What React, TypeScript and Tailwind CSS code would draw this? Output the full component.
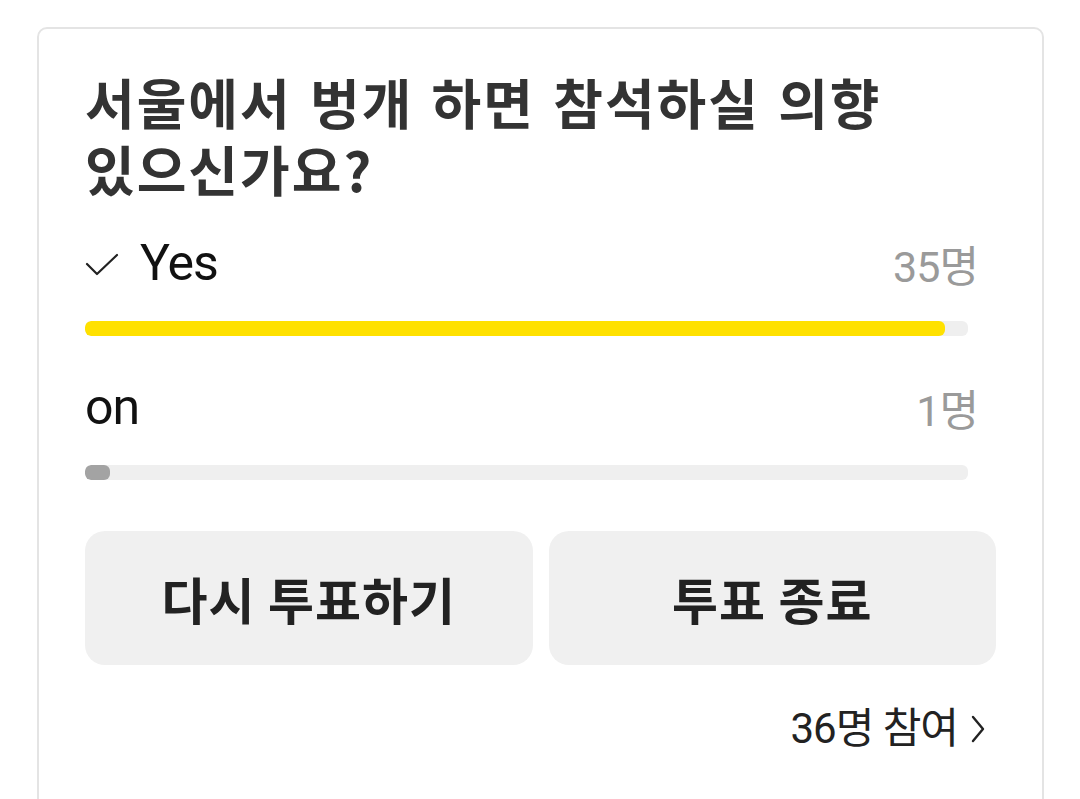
import React from "react";

const KR = { fontFamily: '"Noto Sans CJK KR", "Noto Sans", sans-serif' };
const RB = { fontFamily: 'Roboto, "Noto Sans CJK KR", sans-serif' };

function Check() {
  return (
    <svg width="34" height="24" viewBox="0 0 34 24" className="mr-[21px] mt-[4px]">
      <path d="M2 11 L12 21 L32 2" fill="none" stroke="#222" strokeWidth="2.2" strokeLinecap="round" strokeLinejoin="round" />
    </svg>
  );
}

function Option({ label, count, pct, checked, color }: { label: string; count: string; pct: number; checked?: boolean; color: string }) {
  return (
    <div className="flex flex-col">
      <div className="flex items-center justify-between h-[52px] pr-[18px]">
        <div className="flex items-center">
          {checked && <Check />}
          <span style={RB} className="text-[50px] text-[#111] leading-none tracking-[-1px]">{label}</span>
        </div>
        <span style={RB} className="text-[43px] text-[#9a9a9a] leading-none mt-[8px] tracking-[-1px]">{count}</span>
      </div>
      <div className="mt-[32px] mr-[28px] h-[15px] rounded-[6px] bg-[#efefef] overflow-hidden">
        <div className="h-full rounded-[6px]" style={{ width: `${pct}%`, background: color }} />
      </div>
    </div>
  );
}

export default function App() {
  return (
    <div className="w-[1080px] h-[799px] bg-white overflow-hidden pt-[27px] pl-[37px]">
      <div className="w-[1007px] h-[820px] border-2 border-[#e4e4e4] rounded-[10px] px-[46px] pt-[39px]">
        <h1 style={KR} className="text-[54px] font-bold text-[#333] leading-[67px] tracking-[2px] [word-spacing:4px]">
          <span className="block">서울에서 벙개 하면 참석하실 의향</span>
          <span className="block">있으신가요?</span>
        </h1>
        <div className="mt-[35px] flex flex-col gap-[45px]">
          <Option label="Yes" count="35명" pct={97.4} checked color="#ffe100" />
          <Option label="on" count="1명" pct={2.8} color="#a3a3a3" />
        </div>
        <div className="mt-[51px] grid grid-cols-2 gap-[16px]">
          <button style={KR} className="h-[134px] rounded-[20px] bg-[#f0f0f0] text-[50px] font-bold text-[#222] tracking-[1px]">다시 투표하기</button>
          <button style={KR} className="h-[134px] rounded-[20px] bg-[#f0f0f0] text-[50px] font-bold text-[#222] tracking-[1px]">투표 종료</button>
        </div>
        <div className="mt-[43px] flex justify-end items-center pr-[10px] h-[42px]">
          <span style={RB} className="text-[42px] text-[#222] leading-none tracking-[-1px]">36명 참여</span>
          <svg width="16" height="30" viewBox="0 0 16 30" className="ml-[12px]">
            <path d="M3 3 L13 15 L3 27" fill="none" stroke="#222" strokeWidth="2.4" strokeLinecap="round" strokeLinejoin="round" />
          </svg>
        </div>
      </div>
    </div>
  );
}
